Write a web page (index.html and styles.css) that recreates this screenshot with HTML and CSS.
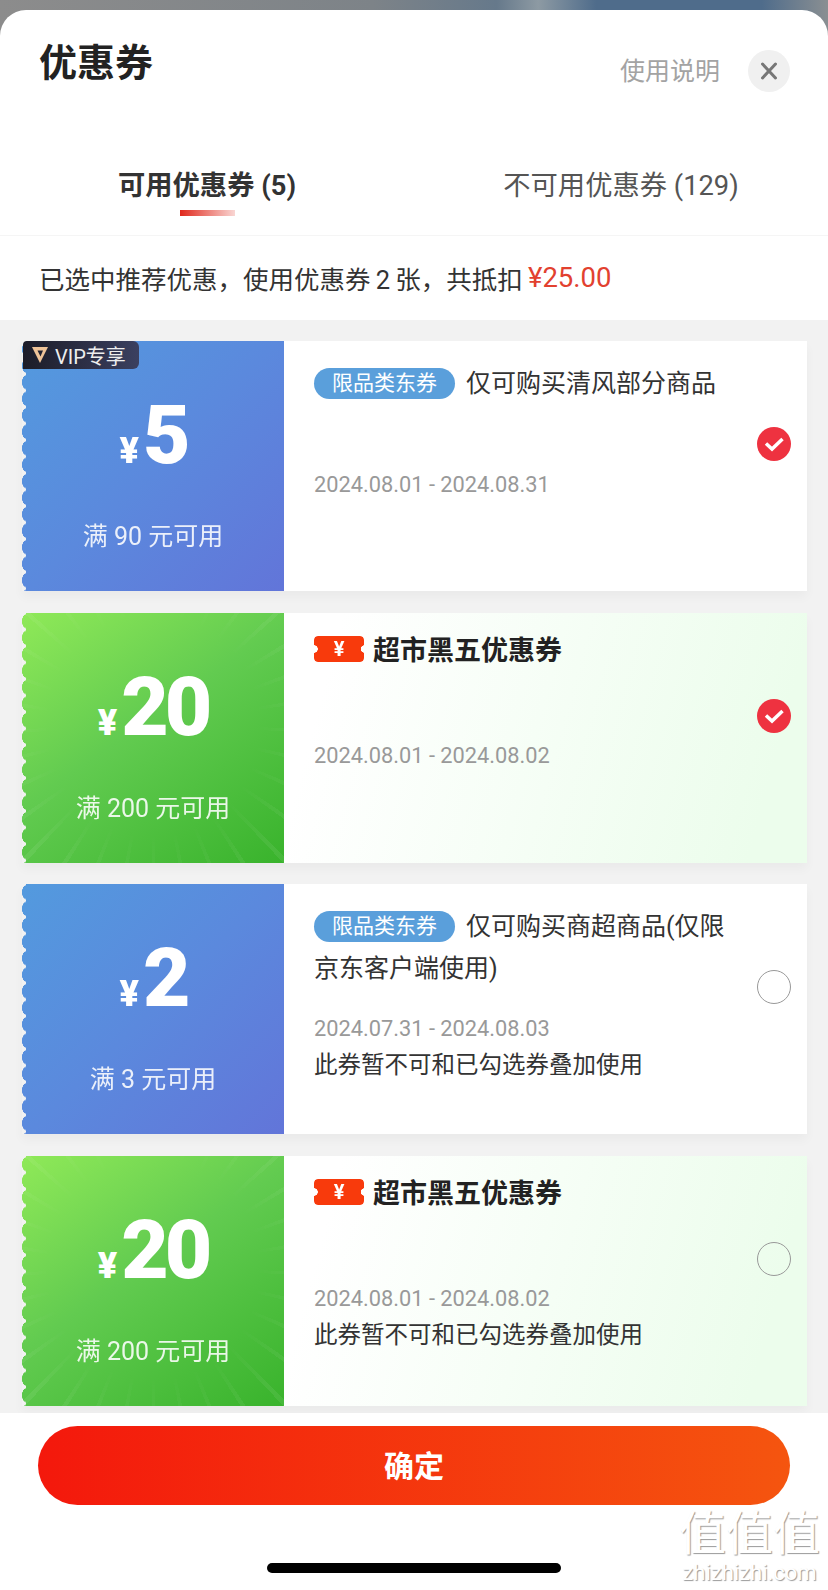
FILE: index.html
```html
<!DOCTYPE html>
<html lang="zh-CN">
<head>
    <meta charset="UTF-8">
    <meta name="viewport" content="width=device-width,initial-scale=1">
    <title>优惠券</title>
    <link rel="stylesheet" href="styles.css">
</head>
<body>
<div class="sheet">
    <div class="head">
        <h1 class="title">优惠券</h1>
        <div class="head-right">
            <span class="help">使用说明</span>
            <span class="close">
                <svg width="18" height="18" viewBox="0 0 18 18"><path d="M2.500 2 L15.500 16 M15.500 2 L2.500 16" stroke="#777" stroke-width="3" stroke-linecap="round"/></svg>
            </span>
        </div>
    </div>
    <div class="tabs">
        <div class="tab active">可用优惠券 (5)<i class="tab-line"></i></div>
        <div class="tab">不可用优惠券 (129)</div>
    </div>
    <p class="summary">已选中推荐优惠，使用优惠券&#8201;2&#8201;张，共抵扣&#8201;<span class="saved">¥25.00</span></p>
    <div class="list">
        <div class="coupon">
            <div class="face blue">
                <p class="amount"><span class="yen">¥</span><span class="num">5</span></p>
                <p class="limit">满 90 元可用</p>
            </div>
            <div class="detail">
                <div class="info">
                    <p class="desc"><span class="tag">限品类东券</span>仅可购买清风部分商品</p>
                    <p class="date">2024.08.01 - 2024.08.31</p>
                </div>
                <span class="radio checked">
                    <svg width="22" height="18" viewBox="0 0 22 18"><path d="M3 8.500 L9 14 L19.500 4" fill="none" stroke="#fff" stroke-width="3.500"/></svg>
                </span>
            </div>
            <div class="vip">
                <svg width="18" height="18" viewBox="0 0 18 18"><path d="M1 1 H17 L9 17 Z M6.500 4.500 L9.500 10.500 L12 4.500 Z" fill="#efc398" fill-rule="evenodd"/></svg>
                VIP专享
            </div>
        </div>
        <div class="coupon">
            <div class="face green">
                <p class="amount"><span class="yen">¥</span><span class="num">20</span></p>
                <p class="limit">满 200 元可用</p>
            </div>
            <div class="detail tinted">
                <div class="info">
                    <p class="promo"><span class="ticket">¥</span>超市黑五优惠券</p>
                    <p class="date">2024.08.01 - 2024.08.02</p>
                </div>
                <span class="radio checked">
                    <svg width="22" height="18" viewBox="0 0 22 18"><path d="M3 8.500 L9 14 L19.500 4" fill="none" stroke="#fff" stroke-width="3.500"/></svg>
                </span>
            </div>
        </div>
        <div class="coupon">
            <div class="face blue">
                <p class="amount"><span class="yen">¥</span><span class="num">2</span></p>
                <p class="limit">满 3 元可用</p>
            </div>
            <div class="detail">
                <div class="info">
                    <p class="desc"><span class="tag">限品类东券</span>仅可购买商超商品(仅限<br>京东客户端使用)</p>
                    <p class="date">2024.07.31 - 2024.08.03</p>
                    <p class="warn">此券暂不可和已勾选券叠加使用</p>
                </div>
                <span class="radio"></span>
            </div>
        </div>
        <div class="coupon">
            <div class="face green">
                <p class="amount"><span class="yen">¥</span><span class="num">20</span></p>
                <p class="limit">满 200 元可用</p>
            </div>
            <div class="detail tinted">
                <div class="info">
                    <p class="promo"><span class="ticket">¥</span>超市黑五优惠券</p>
                    <p class="date">2024.08.01 - 2024.08.02</p>
                    <p class="warn">此券暂不可和已勾选券叠加使用</p>
                </div>
                <span class="radio"></span>
            </div>
        </div>
    </div>
    <div class="foot">
        <button class="confirm">确定</button>
        <i class="home-bar"></i>
    </div>
</div>
<div class="watermark">
    <span class="wm-big">值值值</span>
    <span class="wm-small">zhizhizhi.com</span>
</div>
</body>
</html>
```

FILE: styles.css
```css
* {
    box-sizing: border-box;
}
html,
body {
    height: 1590px;
    margin: 0;
    overflow: hidden;
}
body {
    background: linear-gradient(90deg, #8c8c8c 0%, #7d8388 45%, #66798b 60%, #8d9aa3 65%, #4f6c8b 72%, #4f6c8b 92%, #8a8f92 100%);
    color: #333;
    font-family: Roboto, "Noto Sans CJK SC", sans-serif;
    padding-top: 10px;
    position: relative;
}
p,
h1 {
    margin: 0;
}
.sheet {
    background: #fff;
    border-radius: 26px 26px 0 0;
    display: flex;
    flex-direction: column;
    height: 1580px;
    overflow: hidden;
}
.head {
    align-items: flex-start;
    display: flex;
    height: 130px;
    justify-content: space-between;
    padding: 31px 38px 0 39px;
}
.title {
    color: #222;
    font-size: 38px;
    font-weight: 700;
    line-height: 44px;
}
.head-right {
    align-items: center;
    display: flex;
    gap: 28px;
    margin-top: 9px;
}
.help {
    color: #a3a3a3;
    font-size: 25px;
    margin-top: -4px;
}
.close {
    align-items: center;
    background: #f0f0f0;
    border-radius: 50%;
    display: flex;
    height: 42px;
    justify-content: center;
    width: 42px;
}
.tabs {
    border-bottom: 1px solid #f5f5f5;
    display: grid;
    grid-template-columns: 1fr 1fr;
    height: 96px;
    padding-top: 27px;
}
.tab {
    color: #555;
    font-size: 27.300px;
    line-height: 38px;
    text-align: center;
}
.tab.active {
    color: #333;
    font-weight: 700;
}
.tab-line {
    background: linear-gradient(90deg, #e0281c, #f9d6d3);
    display: block;
    height: 6px;
    margin: 5px auto 0;
    width: 55px;
}
.summary {
    align-items: center;
    display: flex;
    flex-shrink: 0;
    font-size: 25.500px;
    height: 84px;
    padding: 0 0 2px 39px;
    white-space: pre;
}
.saved {
    color: #e2412f;
    font-size: 27.500px;
}
.list {
    background: #f2f2f2;
    display: flex;
    flex: 1;
    flex-direction: column;
    gap: 21.500px;
    overflow: hidden;
    padding: 21px 21px 0 22px;
}
.coupon {
    box-shadow: 0 6px 10px rgba(0, 0, 0, 0.035);
    display: flex;
    flex-shrink: 0;
    height: 250px;
    position: relative;
}
.face {
    -webkit-mask: radial-gradient(ellipse 4px 7px at 4px 50%, #000 96%, transparent 100%) 0 0 / 8px 16.500px repeat-y, linear-gradient(#000, #000) 4px 0 / 100% 100% no-repeat;
    color: #fff;
    flex-shrink: 0;
    padding-top: 49px;
    position: relative;
    text-align: center;
    width: 262px;
}
.face.blue {
    background: linear-gradient(135deg, #539ade 0%, #5b89dd 50%, #6275d9 100%);
}
.face.green {
    background: linear-gradient(145deg, #8fe958 0%, #62cb50 45%, #39b32c 100%);
}
.face.green::after {
    background: repeating-conic-gradient(from 3deg at 50% 45%, rgba(255, 255, 255, 0.07) 0 1.500deg, transparent 1.500deg 11deg);
    content: "";
    inset: 0;
    -webkit-mask: radial-gradient(ellipse at 50% 45%, transparent 55%, #000 90%);
    position: absolute;
}
.amount {
    align-items: baseline;
    display: flex;
    font-weight: 900;
    height: 90px;
    justify-content: center;
    line-height: 90px;
}
.yen {
    font-size: 36px;
    margin-right: 4px;
}
.num {
    font-size: 82px;
    letter-spacing: -4px;
}
.limit {
    font-size: 25px;
    line-height: 36px;
    margin-top: 39px;
    opacity: 0.88;
    position: relative;
    white-space: pre;
    z-index: 1;
}
.detail {
    background: #fff;
    display: flex;
    flex: 1;
    justify-content: space-between;
    padding: 0 16px 0 30px;
}
.detail.tinted {
    background: linear-gradient(105deg, #fff 10%, #ecfdec 90%);
}
.info {
    padding-top: 22px;
    width: 420px;
}
.desc {
    color: #333;
    font-size: 25px;
    line-height: 42px;
    min-height: 83px;
}
.tag {
    background: #5a9fdb;
    border-radius: 16px;
    color: #fff;
    display: inline-block;
    font-size: 21px;
    height: 31px;
    line-height: 31px;
    margin-right: 11px;
    text-align: center;
    vertical-align: 2px;
    width: 141px;
}
.promo {
    align-items: center;
    color: #222;
    display: flex;
    font-size: 27px;
    font-weight: 700;
    height: 34px;
    margin-bottom: 72px;
    margin-top: -3px;
}
.ticket {
    background: #f83a0c;
    border-radius: 4px;
    color: #fff;
    font-size: 20px;
    font-weight: 700;
    height: 26px;
    line-height: 26px;
    margin-right: 9px;
    -webkit-mask: radial-gradient(circle at 0 50%, transparent 3.500px, #000 4px) left / 51% 100% no-repeat, radial-gradient(circle at 100% 50%, transparent 3.500px, #000 4px) right / 51% 100% no-repeat;
    text-align: center;
    width: 50px;
}
.date {
    color: #999;
    font-size: 21.800px;
    line-height: 36px;
    margin-top: 21px;
}
.warn {
    color: #333;
    font-size: 23.500px;
    line-height: 36px;
}
.radio {
    align-items: center;
    border: 1.5px solid #999;
    border-radius: 50%;
    display: flex;
    flex-shrink: 0;
    height: 34px;
    justify-content: center;
    margin-top: 86px;
    width: 34px;
}
.radio.checked {
    background: #ee3240;
    border: none;
}
.vip {
    align-items: center;
    background: linear-gradient(90deg, #1c1c28, #3b4060);
    border-radius: 4px 6px 6px 0;
    color: #eee;
    display: flex;
    font-size: 20px;
    gap: 6px;
    height: 28px;
    left: 1px;
    padding-left: 8px;
    position: absolute;
    top: 0;
    width: 116px;
}
.foot {
    background: #fff;
    flex-shrink: 0;
    height: 177px;
    padding: 13px 38px 0;
}
.confirm {
    background: linear-gradient(90deg, #f4180c, #f5550f);
    border: none;
    border-radius: 40px;
    color: #fff;
    display: block;
    font-family: inherit;
    font-size: 30px;
    font-weight: 700;
    height: 79px;
    padding: 0 0 4px;
    width: 100%;
}
.home-bar {
    background: #000;
    border-radius: 5px;
    display: block;
    height: 10px;
    margin: 58px auto 0;
    width: 294px;
}
.watermark {
    align-items: center;
    color: #fff;
    display: flex;
    flex-direction: column;
    position: absolute;
    right: 8px;
    text-shadow: 1px 1px 1px #9a9a9a;
    top: 1506px;
}
.wm-big {
    font-size: 47px;
    line-height: 56px;
}
.wm-small {
    font-size: 22px;
    line-height: 22px;
}
```
